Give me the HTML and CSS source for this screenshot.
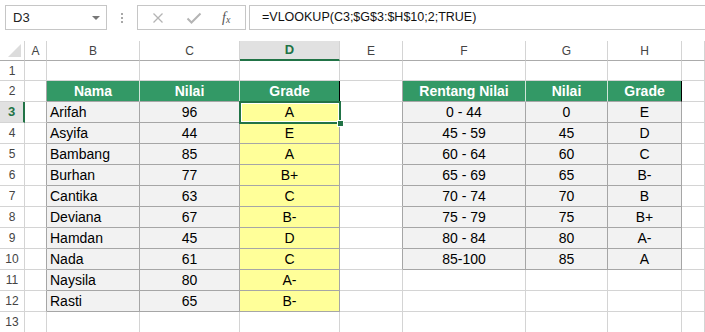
FILE: index.html
```html
<!DOCTYPE html>
<html lang="id">
<head>
    <meta charset="UTF-8">
    <title>VLOOKUP Grade</title>
    <link rel="stylesheet" href="styles.css">
</head>
<body>
    <div class="toolbar">
        <div class="name-box">
            <span>D3</span>
            <span class="drop"></span>
        </div>
        <div class="grip"><i></i><i></i><i></i></div>
        <div class="btn-group">
            <svg width="12" height="12" viewBox="0 0 12 12"><path d="M1.5 1.5 L10.5 10.5 M10.5 1.5 L1.5 10.5" stroke="#b4b4b4" stroke-width="1.3" fill="none"/></svg>
            <svg width="16" height="12" viewBox="0 0 16 12"><path d="M1.5 6.5 L5.5 10.5 L14.5 1.5" stroke="#b4b4b4" stroke-width="2" fill="none"/></svg>
            <span class="fx">f<sub>x</sub></span>
        </div>
        <div class="formula">=VLOOKUP(C3;$G$3:$H$10;2;TRUE)</div>
    </div>

    <table class="sheet">
        <colgroup>
            <col style="width:25px"><col style="width:22px"><col style="width:93px"><col style="width:100px"><col style="width:100px">
            <col style="width:63px"><col style="width:123px"><col style="width:82px"><col style="width:74px"><col style="width:23px">
        </colgroup>
        <tr class="cols">
            <td class="corner"><span class="tri"></span></td>
            <td>A</td><td>B</td><td>C</td><td class="active-col">D</td><td>E</td><td>F</td><td>G</td><td>H</td><td></td>
        </tr>
        <tr class="r1">
            <td class="rh">1</td><td></td><td></td><td></td><td></td><td></td><td></td><td></td><td></td><td></td>
        </tr>
        <tr>
            <td class="rh">2</td><td class="edge"></td>
            <td class="head">Nama</td><td class="head">Nilai</td><td class="head end">Grade</td>
            <td class="edge"></td>
            <td class="head">Rentang Nilai</td><td class="head">Nilai</td><td class="head end">Grade</td><td></td>
        </tr>
        <tr>
            <td class="rh active-row">3</td><td class="edge"></td>
            <td class="gr">Arifah</td><td class="gr c">96</td><td class="yl c sel">A<span class="sel-box"></span><span class="handle"></span></td>
            <td class="edge"></td>
            <td class="gr c">0 - 44</td><td class="gr c">0</td><td class="gr c">E</td><td></td>
        </tr>
        <tr>
            <td class="rh">4</td><td class="edge"></td>
            <td class="gr">Asyifa</td><td class="gr c">44</td><td class="yl c">E</td>
            <td class="edge"></td>
            <td class="gr c">45 - 59</td><td class="gr c">45</td><td class="gr c">D</td><td></td>
        </tr>
        <tr>
            <td class="rh">5</td><td class="edge"></td>
            <td class="gr">Bambang</td><td class="gr c">85</td><td class="yl c">A</td>
            <td class="edge"></td>
            <td class="gr c">60 - 64</td><td class="gr c">60</td><td class="gr c">C</td><td></td>
        </tr>
        <tr>
            <td class="rh">6</td><td class="edge"></td>
            <td class="gr">Burhan</td><td class="gr c">77</td><td class="yl c">B+</td>
            <td class="edge"></td>
            <td class="gr c">65 - 69</td><td class="gr c">65</td><td class="gr c">B-</td><td></td>
        </tr>
        <tr>
            <td class="rh">7</td><td class="edge"></td>
            <td class="gr">Cantika</td><td class="gr c">63</td><td class="yl c">C</td>
            <td class="edge"></td>
            <td class="gr c">70 - 74</td><td class="gr c">70</td><td class="gr c">B</td><td></td>
        </tr>
        <tr>
            <td class="rh">8</td><td class="edge"></td>
            <td class="gr">Deviana</td><td class="gr c">67</td><td class="yl c">B-</td>
            <td class="edge"></td>
            <td class="gr c">75 - 79</td><td class="gr c">75</td><td class="gr c">B+</td><td></td>
        </tr>
        <tr>
            <td class="rh">9</td><td class="edge"></td>
            <td class="gr">Hamdan</td><td class="gr c">45</td><td class="yl c">D</td>
            <td class="edge"></td>
            <td class="gr c">80 - 84</td><td class="gr c">80</td><td class="gr c">A-</td><td></td>
        </tr>
        <tr>
            <td class="rh">10</td><td class="edge"></td>
            <td class="gr">Nada</td><td class="gr c">61</td><td class="yl c">C</td>
            <td class="edge"></td>
            <td class="gr c">85-100</td><td class="gr c">85</td><td class="gr c">A</td><td></td>
        </tr>
        <tr>
            <td class="rh">11</td><td class="edge"></td>
            <td class="gr">Naysila</td><td class="gr c">80</td><td class="yl c">A-</td>
            <td></td><td></td><td></td><td></td><td></td>
        </tr>
        <tr>
            <td class="rh">12</td><td class="edge"></td>
            <td class="gr">Rasti</td><td class="gr c">65</td><td class="yl c">B-</td>
            <td></td><td></td><td></td><td></td><td></td>
        </tr>
        <tr>
            <td class="rh">13</td><td></td><td></td><td></td><td></td><td></td><td></td><td></td><td></td><td></td>
        </tr>
    </table>
</body>
</html>
```

FILE: styles.css
```css
body {
    margin: 0;
    background: #fff;
    font-family: "Liberation Sans", Arial, sans-serif;
    overflow: hidden;
}

/* formula bar */
.toolbar {
    height: 41px;
    display: flex;
    align-items: flex-start;
    padding-top: 5px;
    box-sizing: border-box;
}

.name-box {
    width: 102px;
    height: 25px;
    margin-left: 5px;
    border: 1px solid #c6c6c6;
    box-sizing: border-box;
    display: flex;
    align-items: center;
    justify-content: space-between;
    padding: 0 6px 0 7px;
    font-size: 13px;
    color: #222;
}

.drop {
    width: 0;
    height: 0;
    border-left: 4px solid transparent;
    border-right: 4px solid transparent;
    border-top: 4px solid #777;
}

.grip {
    width: 30px;
    height: 25px;
    display: flex;
    flex-direction: column;
    align-items: center;
    justify-content: center;
    gap: 2px;
}

.grip i {
    width: 2px;
    height: 2px;
    background: #a8a8a8;
}

.btn-group {
    width: 109px;
    height: 25px;
    border: 1px solid #c6c6c6;
    box-sizing: border-box;
    display: flex;
    align-items: center;
    padding-left: 14px;
    gap: 22px;
}

.fx {
    font-family: "Liberation Serif", serif;
    font-style: italic;
    font-size: 14px;
    color: #555;
    margin-left: -2px;
}

.fx sub {
    font-size: 10px;
    vertical-align: -1px;
}

.formula {
    flex: 1;
    height: 25px;
    margin-left: 3px;
    border: 1px solid #c6c6c6;
    border-right: none;
    box-sizing: border-box;
    padding-left: 12px;
    font-size: 12.5px;
    line-height: 23px;
    color: #111;
}

/* grid */
.sheet {
    table-layout: fixed;
    border-collapse: separate;
    border-spacing: 0;
    width: 705px;
    font-size: 14px;
    color: #000;
}

.sheet td {
    height: 21px;
    padding: 0 3px;
    border-right: 1px solid #d4d4d4;
    border-bottom: 1px solid #d4d4d4;
    box-sizing: border-box;
    white-space: nowrap;
    overflow: hidden;
    line-height: 18px;
}

.sheet .cols td {
    height: 20px;
    text-align: center;
    font-size: 12px;
    color: #444;
    border-bottom-color: #ababab;
}

.sheet .r1 td {
    height: 20px;
}

.sheet td.corner {
    position: relative;
}

.tri {
    position: absolute;
    right: 3px;
    bottom: 3px;
    width: 0;
    height: 0;
    border-left: 13px solid transparent;
    border-bottom: 13px solid #dcdcdc;
}

.sheet td.rh {
    text-align: center;
    font-size: 12px;
    color: #444;
    padding: 0;
}

.sheet .cols td.active-col {
    background: #e1e1e1;
    color: #217346;
    font-weight: bold;
    font-size: 13px;
    border-bottom: 2px solid #217346;
}

.sheet td.active-row {
    background: #e1e1e1;
    color: #217346;
    font-weight: bold;
    font-size: 13px;
    border-right: 2px solid #217346;
}

.sheet td.edge {
    border-right-color: #a6a6a6;
}

.sheet td.head {
    background: #339966;
    color: #fff;
    font-weight: bold;
    text-align: center;
    border-right-color: #cfe5d9;
    border-bottom-color: #a6a6a6;
}

.sheet td.head.end {
    border-right-color: #000;
}

.sheet td.gr {
    background: #f2f2f2;
    border-right-color: #a6a6a6;
    border-bottom-color: #a6a6a6;
}

.sheet td.yl {
    background: #ffff99;
    border-right-color: #a6a6a6;
    border-bottom-color: #a6a6a6;
}

.sheet td.c {
    text-align: center;
}

.sheet td.sel {
    position: relative;
    overflow: visible;
}

.sel-box {
    position: absolute;
    left: -1px;
    top: -1px;
    right: -2px;
    bottom: -2px;
    border: 2px solid #217346;
    box-shadow: inset 0 0 0 1px #fff;
}

.handle {
    position: absolute;
    right: -5px;
    bottom: -5px;
    width: 5px;
    height: 5px;
    background: #217346;
    border: 1px solid #fff;
    z-index: 2;
}
```
